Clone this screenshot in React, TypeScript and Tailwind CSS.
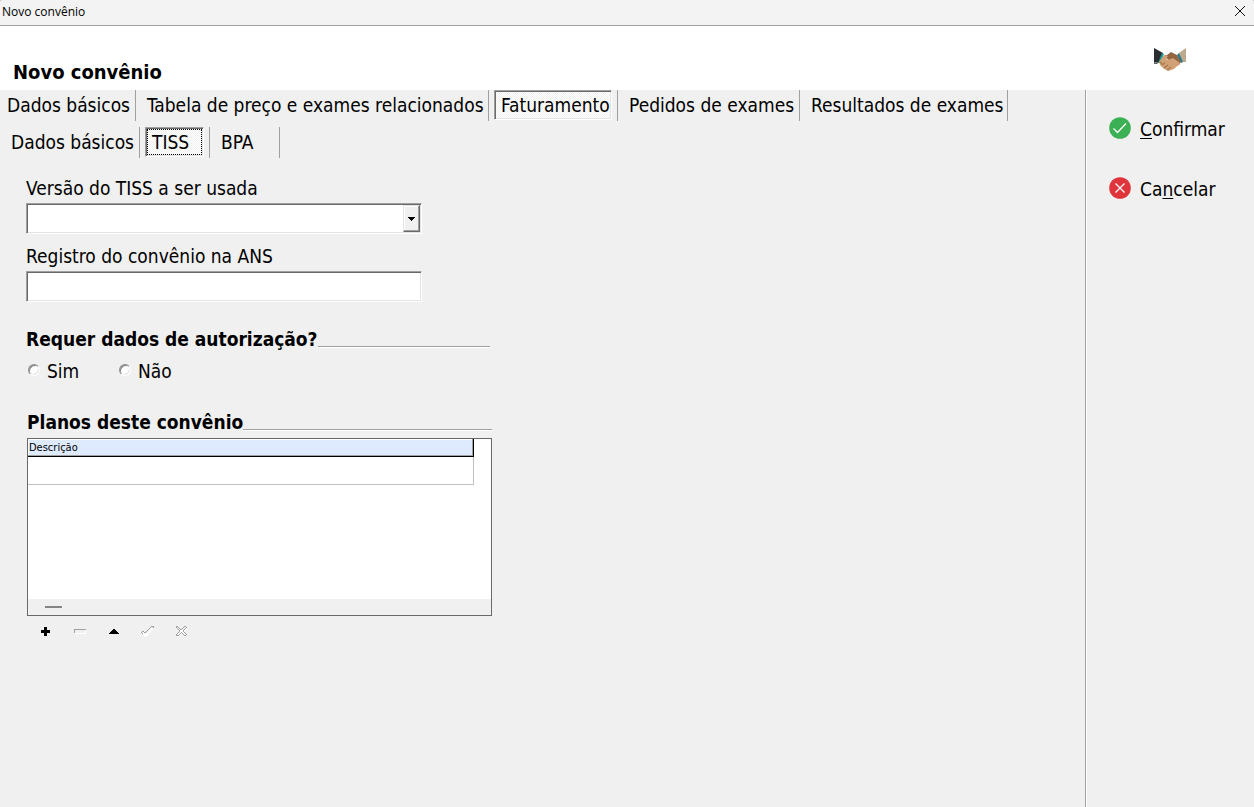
import { useState } from "react"
import type { ReactNode } from "react"
import { clsx } from "clsx"

interface TabItem {
  label: string
  width: string
}

const mainTabs: TabItem[] = [
  { label: "Dados básicos", width: "w-[129px]" },
  { label: "Tabela de preço e exames relacionados", width: "w-[342px]" },
  { label: "Faturamento", width: "w-[118px]" },
  { label: "Pedidos de exames", width: "w-[171px]" },
  { label: "Resultados de exames", width: "w-[197px]" },
]

const billingTabs: TabItem[] = [
  { label: "Dados básicos", width: "w-[129px]" },
  { label: "TISS", width: "w-[59px]" },
  { label: "BPA", width: "w-[59px]" },
]

const sunken =
  "border border-t-[#a0a0a0] border-l-[#a0a0a0] border-r-white border-b-white shadow-[inset_1px_1px_0_#696969,inset_-1px_-1px_0_#e3e3e3]"

interface TabStripProps {
  tabs: TabItem[]
  initial: string
  focused?: boolean
}

function TabStrip({ tabs, initial, focused }: TabStripProps) {
  const [active, setActive] = useState(initial)

  return (
    <div role="tablist" className="flex h-[31px]">
      {tabs.map((tab) => {
        const selected = tab.label === active
        return (
          <div key={tab.label} className="flex border-r border-[#a0a0a0] pr-[5px] pl-[5px] first:pl-px">
            <button
              role="tab"
              aria-selected={selected}
              onClick={() => setActive(tab.label)}
              className={clsx(
                "h-[30px] whitespace-nowrap text-left leading-6",
                tab.width,
                selected
                  ? clsx(
                      "bg-[repeating-conic-gradient(#fff_0_25%,#f0f0f0_0_50%)] bg-[length:2px_2px] p-px",
                      sunken
                    )
                  : "px-[6px]"
              )}
            >
              <span
                className={clsx(
                  "block",
                  selected && "h-[26px]",
                  selected && (focused ? "border border-dotted border-black pl-1" : "pt-px pl-[5px]")
                )}
              >
                {tab.label}
              </span>
            </button>
          </div>
        )
      })}
    </div>
  )
}

/** Bold caption followed by an etched rule */
function SectionTitle({ children }: { children: ReactNode }) {
  return (
    <div className="flex items-end">
      <h2 className="h-[21px] font-bold leading-6">{children}</h2>
      <div className="h-[2px] flex-1 border-t border-[#a0a0a0] bg-white" />
    </div>
  )
}

function RadioOption({ label }: { label: string }) {
  return (
    <label className="flex w-[91px] items-start gap-[7px]">
      <input
        type="radio"
        name="autorizacao"
        className="mt-[5px] size-3 appearance-none rounded-full border border-t-[#909090] border-l-[#909090] border-r-white border-b-white bg-white shadow-[inset_1px_1px_0_#808080,inset_-1px_-1px_0_#e3e3e3] checked:bg-black"
      />
      {label}
    </label>
  )
}

function NavButton({ title, disabled, children }: { title: string; disabled?: boolean; children: ReactNode }) {
  return (
    <button
      type="button"
      title={title}
      disabled={disabled}
      className="flex h-6 w-[34px] items-center justify-center"
    >
      <svg width="14" height="12" viewBox="0 0 14 12" shapeRendering="crispEdges" className="overflow-visible">
        {children}
      </svg>
    </button>
  )
}

function Handshake() {
  return (
    <svg width="32" height="24" viewBox="0 0 32 24" aria-hidden="true">
      <path d="M0 0 9 5 5 15 0 14Z" fill="#2c2d31" />
      <path d="M0 14 4 15 3 16H0Z" fill="#606264" />
      <path d="M8 5 10 6 6 15 4 15Z" fill="#1b9c98" />
      <path d="M32 0 25 5 28 14 32 14Z" fill="#bda98b" />
      <path d="M25 5 23 7 27 15 29 14Z" fill="#23798f" />
      <path d="M9 8 13 7 17 4 23 7 27 14 25 17 15 12Z" fill="#916640" />
      <path
        d="M10 7 14 8 12 11 14 12 19 10 26 15 25 17 22 19 20 21 17 22 15 23 12 22 9 20 6 17 5 14Z"
        fill="#d1a175"
      />
      <path d="M6 14 8 16M8 17 11 15M10 20 14 17M13 22 17 19" stroke="#a8764c" strokeWidth="1.2" fill="none" />
    </svg>
  )
}

export default function App() {
  return (
    <div className="min-h-screen bg-[#c4c4c4]">
      <div className="flex min-h-screen flex-col rounded-t-[3px] bg-[#f0f0f0] font-['DejaVu_Sans_Condensed','DejaVu_Sans',sans-serif] text-[19px] leading-6 text-black">
        {/* Title bar */}
        <div className="flex h-[26px] items-start justify-between rounded-t-[3px] border-b border-[#a0a0a0] bg-[#f3f3f3] pt-1 pr-2 pl-[2px]">
          <span className="font-['Open_Sans',sans-serif] text-[12px] leading-4">Novo convênio</span>
          <button aria-label="Fechar" className="pt-px">
            <svg width="12" height="12" viewBox="0 0 12 12" fill="none" stroke="#111">
              <path d="M1 1 11 11M11 1 1 11" />
            </svg>
          </button>
        </div>

        {/* Header */}
        <header className="flex h-16 items-end justify-between bg-white pr-[68px] pb-[6px] pl-[13px]">
          <h1 className="text-[20px] font-bold leading-6">Novo convênio</h1>
          <div className="pb-3">
            <Handshake />
          </div>
        </header>

        <div className="flex flex-1">
          <main className="min-w-0 flex-1">
            <TabStrip tabs={mainTabs} initial="Faturamento" />
            <div className="pt-[6px] pl-1">
              <TabStrip tabs={billingTabs} initial="TISS" focused />
            </div>

            <form className="w-[492px] pt-[18px] pl-[26px]">
              <div className="w-[396px]">
                <label htmlFor="versao" className="block pb-[3px]">
                  Versão do TISS a ser usada
                </label>
                <div className="relative">
                  <select id="versao" className={clsx("block h-[31px] w-full appearance-none bg-white px-1", sunken)}>
                    <option value=""></option>
                  </select>
                  <div className="pointer-events-none absolute top-[2px] right-[2px] flex h-[27px] w-[17px] items-center justify-center border border-t-[#e3e3e3] border-l-[#e3e3e3] border-r-[#696969] border-b-[#696969] bg-[#f0f0f0] shadow-[inset_-1px_-1px_0_#a0a0a0,inset_1px_1px_0_#fff]">
                    <svg width="7" height="4" viewBox="0 0 7 4" shapeRendering="crispEdges">
                      <path d="M0 0h7v1H0zM1 1h5v1H1zM2 2h3v1H2zM3 3h1v1H3z" />
                    </svg>
                  </div>
                </div>
                <label htmlFor="registro" className="block pt-[10px] pb-[3px]">
                  Registro do convênio na ANS
                </label>
                <input id="registro" type="text" className={clsx("block h-[31px] w-full bg-white px-1", sunken)} />
              </div>

              <div className="pt-[25px] pr-[2px]">
                <SectionTitle>Requer dados de autorização?</SectionTitle>
              </div>
              <div className="flex pt-[11px] pl-[2px]">
                <RadioOption label="Sim" />
                <RadioOption label="Não" />
              </div>

              <div className="pt-[27px] pl-px">
                <SectionTitle>Planos deste convênio</SectionTitle>
                <div className="mt-[7px] flex h-[178px] flex-col justify-between border border-[#696969] bg-white">
                  <table className="w-[446px] border-separate border-spacing-0">
                    <thead>
                      <tr>
                        <th className="h-[18px] border-r border-b border-black bg-[#deebff] p-0 pl-px text-left text-[11px] leading-4 font-normal shadow-[inset_-1px_-1px_0_#a0a0a0,inset_1px_1px_0_#fff]">
                          Descrição
                        </th>
                      </tr>
                    </thead>
                    <tbody>
                      <tr>
                        <td className="h-7 border-r border-b border-[#c0c0c0] p-0" />
                      </tr>
                    </tbody>
                  </table>
                  <div className="flex h-4 items-center bg-[#f0f0f0] pl-[17px]">
                    <div className="h-[2px] w-[17px] bg-[#858585]" />
                  </div>
                </div>

                <div className="flex pt-[3px] pl-px">
                  <NavButton title="Inserir">
                    <path d="M6 2h3v3h3v3h-3v3h-3v-3h-3v-3h3z" />
                  </NavButton>
                  <NavButton title="Excluir" disabled>
                    <path d="M3 8h10v-3h1v4h-12v-1z" fill="#fff" />
                    <path d="M2 4h12v1h-11v3h-1z" fill="#a0a0a0" />
                  </NavButton>
                  <NavButton title="Editar">
                    <path d="M7 4h2v1h1v1h1v1h1v1h1v1h-10v-1h1v-1h1v-1h1v-1h1z" />
                  </NavButton>
                  <NavButton title="Gravar" disabled>
                    <g transform="translate(1)">
                      <path d="M2 8l3 3 7-8" fill="none" stroke="#fff" strokeWidth="2" />
                      <path
                        d="M1 6h2v1h-2zM3 7h2v1h-2zM5 6h1v1h-1zM6 5h1v1h-1zM7 4h1v1h-1zM8 3h1v1h-1zM9 2h1v1h-1zM10 1h3v1h-3zM12 2h1v1h-1zM0 7h1v1h-1zM1 8h1v1h-1z"
                        fill="#a0a0a0"
                      />
                    </g>
                  </NavButton>
                  <NavButton title="Cancelar edição" disabled>
                    <g transform="translate(1)">
                      <path d="M3 3l8 8M12 3l-9 8" fill="none" stroke="#fff" strokeWidth="2" />
                      <path
                        d="M1 1h2v1h-2zM3 2h1v1h-1zM4 3h1v1h-1zM5 4h1v1h-1zM6 4h1v1h-1zM7 3h1v1h-1zM8 2h1v1h-1zM9 1h2v1h-2zM11 2h1v1h-1zM10 3h1v1h-1zM9 4h1v1h-1zM8 5h1v2h-1zM1 2h1v1h-1zM2 3h1v1h-1zM3 4h1v1h-1zM4 5h1v2h-1zM3 7h1v1h-1zM2 8h1v1h-1zM1 9h1v2h-1zM2 10h2v1h-2zM4 9h1v1h-1zM5 8h1v1h-1zM6 7h1v1h-1zM7 8h1v1h-1zM8 9h1v1h-1zM9 10h2v1h-2zM9 7h1v1h-1zM10 8h1v1h-1zM11 9h1v1h-1z"
                        fill="#a0a0a0"
                      />
                    </g>
                  </NavButton>
                </div>
              </div>
            </form>
          </main>

          {/* Actions */}
          <aside className="flex w-[169px] flex-col items-start gap-9 border-l border-[#a0a0a0] pt-[27px] pl-[23px] shadow-[inset_1px_0_0_#fff]">
            <button className="flex items-start gap-[9px]">
              <svg width="22" height="22" viewBox="0 0 22 22" fill="none">
                <circle cx="11" cy="11" r="10.8" fill="#3bb054" />
                <path d="M4.500 11.500 8.500 15.500 17 6.500" stroke="#fff" strokeWidth="1.300" />
              </svg>
              <span>
                <u className="decoration-1 underline-offset-2">C</u>onfirmar
              </span>
            </button>
            <button className="flex items-start gap-[9px]">
              <svg width="22" height="22" viewBox="0 0 22 22" fill="none">
                <circle cx="11" cy="11" r="10.8" fill="#e0343c" />
                <path d="M6.500 6.500 15.500 15.500M15.500 6.500 6.500 15.500" stroke="#fff" strokeWidth="1.300" />
              </svg>
              <span>
                Ca<u className="decoration-1 underline-offset-2">n</u>celar
              </span>
            </button>
          </aside>
        </div>
      </div>
    </div>
  )
}
